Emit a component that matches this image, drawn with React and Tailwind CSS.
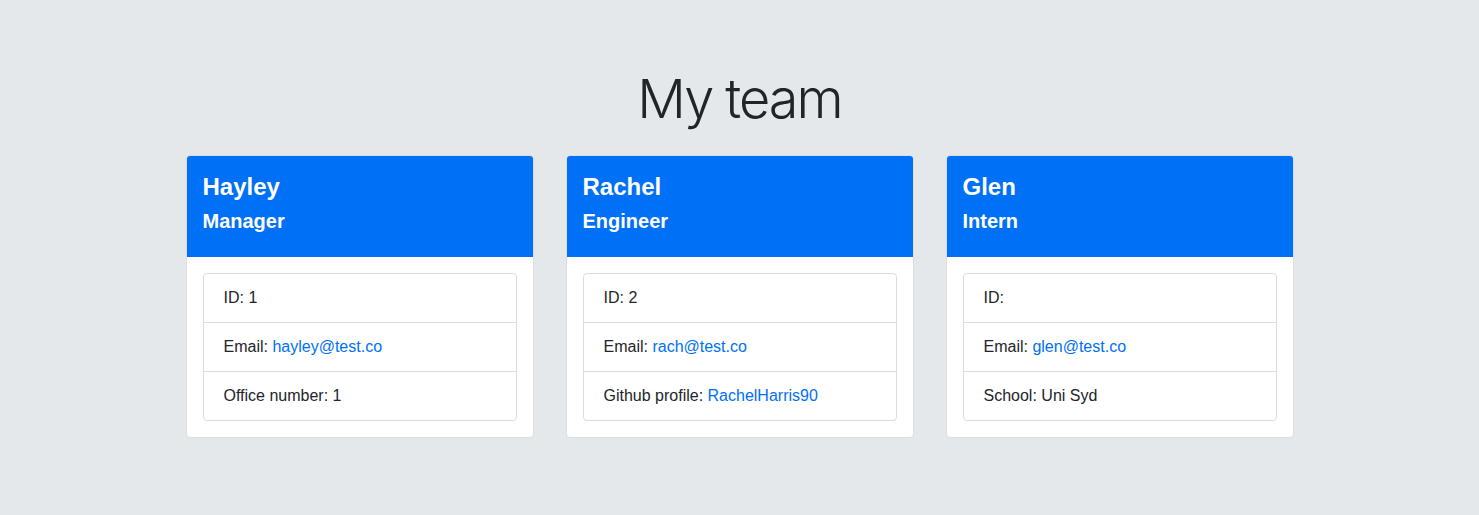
import React from "react";

const team = [
  {
    name: "Hayley",
    role: "Manager",
    id: "1",
    email: "hayley@test.co",
    extra: { label: "Office number:", value: "1" },
  },
  {
    name: "Rachel",
    role: "Engineer",
    id: "2",
    email: "rach@test.co",
    extra: { label: "Github profile:", value: "RachelHarris90", link: true },
  },
  {
    name: "Glen",
    role: "Intern",
    id: "",
    email: "glen@test.co",
    extra: { label: "School:", value: "Uni Syd" },
  },
];

function Card({ m }) {
  return (
    <div className="w-[348px] bg-white border border-[#dcdee0] rounded-[4px] overflow-hidden">
      <div className="bg-[#0070f6] text-white px-4 pt-4 h-[101px]">
        <div className="text-[24px] leading-[29px] font-bold mb-2">{m.name}</div>
        <div className="text-[20px] leading-[24px] font-bold">{m.role}</div>
      </div>
      <div className="p-4">
        <ul className="border border-[#dcdcdc] rounded-[4px] text-[16px] leading-[24px] text-[#212529]">
          <li className="px-5 py-3 border-b border-[#dcdcdc]">ID: {m.id}</li>
          <li className="px-5 py-3 border-b border-[#dcdcdc]">
            Email: <a className="text-[#0070f6]">{m.email}</a>
          </li>
          <li className="px-5 py-3">
            {m.extra.label}{" "}
            {m.extra.link ? (
              <a className="text-[#0070f6]">{m.extra.value}</a>
            ) : (
              m.extra.value
            )}
          </li>
        </ul>
      </div>
    </div>
  );
}

export default function App() {
  return (
    <div
      className="min-h-[515px] bg-[#e4e8eb] pt-[65px] pb-[78px]"
      style={{ fontFamily: '"Liberation Sans", Arial, sans-serif' }}
    >
      <h1
        className="text-center text-[54px] leading-[67px] font-light tracking-[-2px] text-[#212529] mb-[23px]"
        style={{ fontFamily: 'Inter, "Liberation Sans", sans-serif' }}
      >
        My team
      </h1>
      <div className="flex justify-center gap-8">
        {team.map((m) => (
          <Card key={m.name} m={m} />
        ))}
      </div>
    </div>
  );
}
